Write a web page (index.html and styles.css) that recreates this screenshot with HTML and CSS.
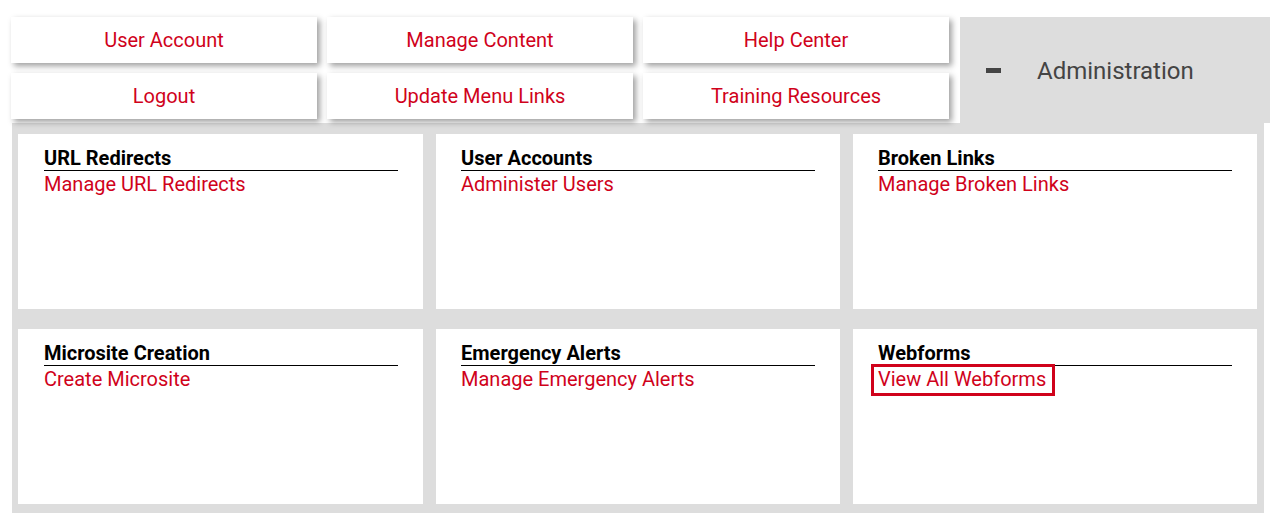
FILE: index.html
```html
<!DOCTYPE html>
<html lang="en">
<head>
<meta charset="utf-8">
<title>Administration</title>
<link rel="stylesheet" href="styles.css">
</head>
<body>
<div class="page">
  <header class="top">
    <nav class="buttons">
      <a class="btn" href="#">User Account</a>
      <a class="btn" href="#">Manage Content</a>
      <a class="btn" href="#">Help Center</a>
      <a class="btn" href="#">Logout</a>
      <a class="btn" href="#">Update Menu Links</a>
      <a class="btn" href="#">Training Resources</a>
    </nav>
    <div class="admin">
      <span class="minus"></span>
      <span class="admin-label">Administration</span>
    </div>
  </header>
  <main class="panel">
    <section class="card">
      <h2 class="card-title">URL Redirects</h2>
      <div class="card-links"><a class="card-link" href="#">Manage URL Redirects</a></div>
    </section>
    <section class="card">
      <h2 class="card-title">User Accounts</h2>
      <div class="card-links"><a class="card-link" href="#">Administer Users</a></div>
    </section>
    <section class="card">
      <h2 class="card-title">Broken Links</h2>
      <div class="card-links"><a class="card-link" href="#">Manage Broken Links</a></div>
    </section>
    <section class="card">
      <h2 class="card-title">Microsite Creation</h2>
      <div class="card-links"><a class="card-link" href="#">Create Microsite</a></div>
    </section>
    <section class="card">
      <h2 class="card-title">Emergency Alerts</h2>
      <div class="card-links"><a class="card-link" href="#">Manage Emergency Alerts</a></div>
    </section>
    <section class="card">
      <h2 class="card-title">Webforms</h2>
      <div class="card-links"><a class="card-link focused" href="#">View All Webforms</a></div>
    </section>
  </main>
</div>
</body>
</html>
```

FILE: styles.css
```css
html, body {
  margin: 0;
  padding: 0;
  background: #fff;
  font-family: Roboto, "Liberation Sans", Arial, sans-serif;
}

.page {
  padding: 17px 8px 0 11px;
}

.top {
  display: flex;
  align-items: flex-start;
}

.buttons {
  display: grid;
  grid-template-columns: repeat(3, 306px);
  grid-auto-rows: 46px;
  gap: 10px;
  position: relative;
  z-index: 2;
}

.btn {
  display: flex;
  align-items: center;
  justify-content: center;
  background: #fff;
  color: #d0021b;
  text-decoration: none;
  font-size: 20px;
  box-shadow: 3px 3px 6px rgba(0, 0, 0, 0.38);
}

.admin {
  margin-left: 11px;
  width: 310px;
  height: 106px;
  background: #dddddd;
  display: flex;
  align-items: center;
  padding-left: 26px;
  box-sizing: border-box;
}

.minus {
  display: block;
  width: 15px;
  height: 5px;
  background: #444;
  margin-right: 36px;
}

.admin-label {
  font-size: 24px;
  color: #444;
  padding-top: 2px;
}

.panel {
  margin-left: 1px;
  width: 1252px;
  box-sizing: border-box;
  background: #dddddd;
  padding: 11px 7px 9px 6px;
  display: grid;
  grid-template-columns: 405px 404px 404px;
  grid-auto-rows: 175px;
  column-gap: 13px;
  row-gap: 20px;
}

.card {
  background: #fff;
  padding: 14px 25px 0 25px;
}

.card:nth-child(3n+1) {
  padding-left: 26px;
}

.card-title {
  margin: 0;
  font-size: 20px;
  font-weight: 700;
  line-height: 21px;
  color: #000;
  padding-bottom: 1px;
  border-bottom: 1px solid #000;
}

.card-links {
  font-size: 20px;
  line-height: 26px;
}

.card-link {
  color: #d0021b;
  text-decoration: none;
}

.focused {
  padding: 0 6px 2px 4px;
  margin-left: -4px;
  outline: 3px solid #d0021b;
  outline-offset: 0;
}
```
